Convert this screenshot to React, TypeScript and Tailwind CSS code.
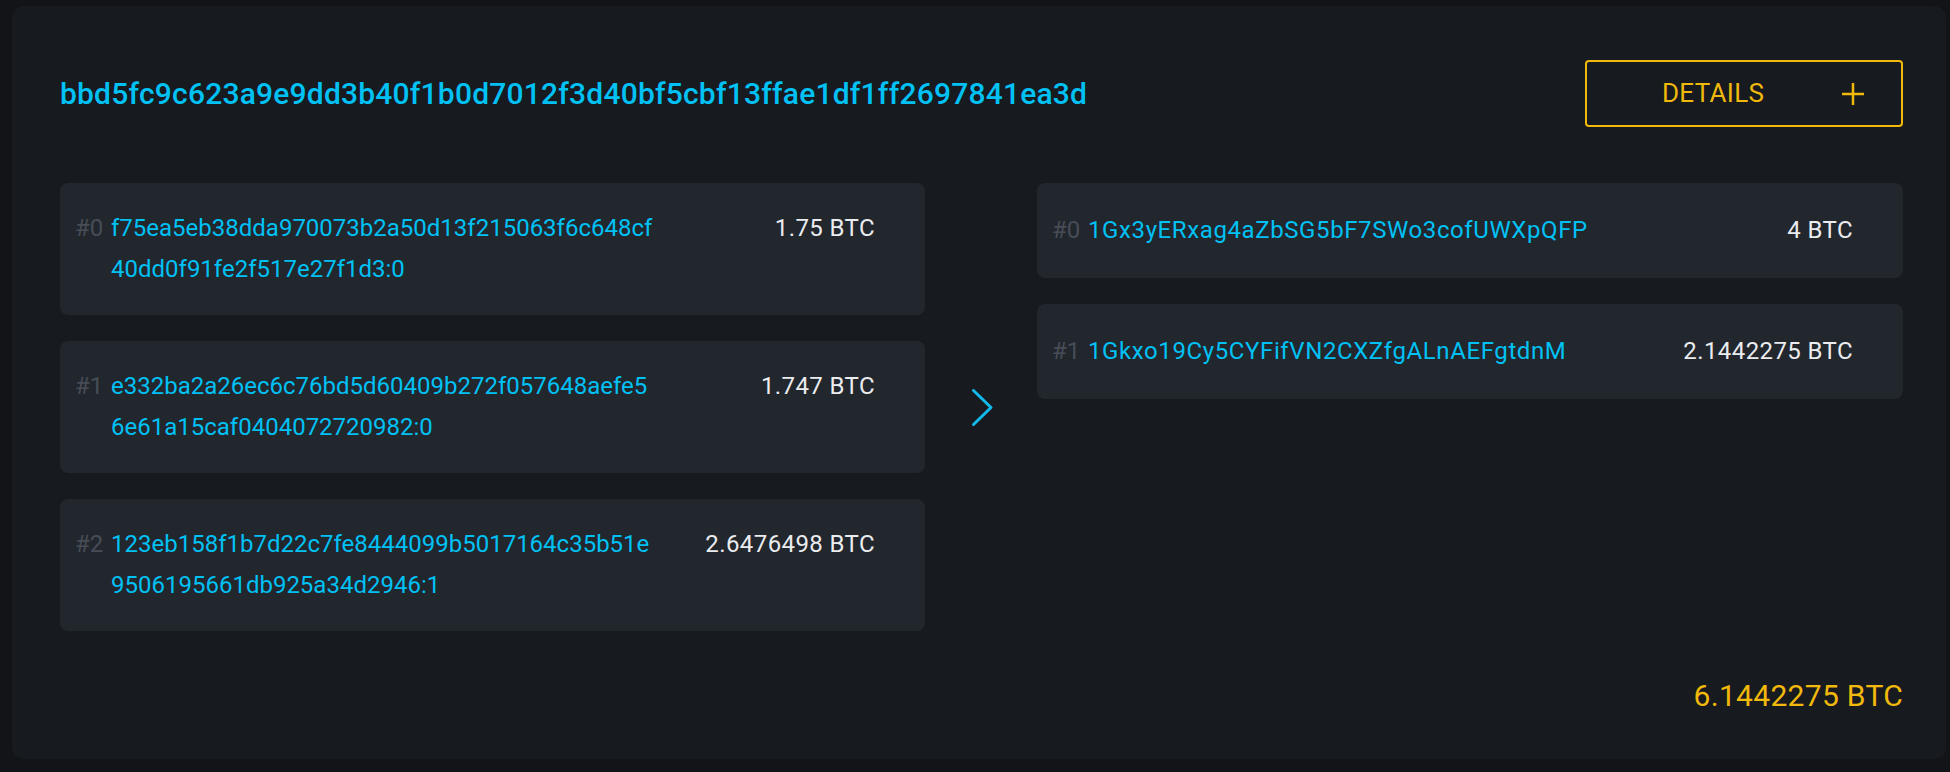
import React from 'react';

const FONT = "font-['Roboto','Liberation_Sans',sans-serif]";

interface Vin {
  hash: string;
  amount: string;
}

interface Vout {
  address: string;
  amount: string;
}

const inputs: Vin[] = [
  { hash: 'f75ea5eb38dda970073b2a50d13f215063f6c648cf40dd0f91fe2f517e27f1d3:0', amount: '1.75 BTC' },
  { hash: 'e332ba2a26ec6c76bd5d60409b272f057648aefe56e61a15caf0404072720982:0', amount: '1.747 BTC' },
  { hash: '123eb158f1b7d22c7fe8444099b5017164c35b51e9506195661db925a34d2946:1', amount: '2.6476498 BTC' },
];

const outputs: Vout[] = [
  { address: '1Gx3yERxag4aZbSG5bF7SWo3cofUWXpQFP', amount: '4 BTC' },
  { address: '1Gkxo19Cy5CYFifVN2CXZfgALnAEFgtdnM', amount: '2.1442275 BTC' },
];

const Chevron = () => (
  <svg width="23" height="39" viewBox="0 0 23 39" fill="none">
    <polyline
      points="2.5,2.5 20,19.5 2.5,36.5"
      stroke="#13b9ea"
      strokeWidth="3"
      strokeLinecap="round"
      strokeLinejoin="round"
    />
  </svg>
);

const InputRow: React.FC<{ index: number; item: Vin }> = ({ index, item }) => (
  <div className="flex items-start rounded-[8px] bg-[#22262d] pl-[15px] pr-[50px] py-[25px] text-[24px] leading-[41px]">
    <span className="w-[36px] shrink-0 text-[#474d57]">#{index}</span>
    <span className="w-[548px] break-all text-[#00c1f4]">{item.hash}</span>
    <span className="ml-auto tracking-[0.4px] text-[#eaecef]">{item.amount}</span>
  </div>
);

const OutputRow: React.FC<{ index: number; item: Vout }> = ({ index, item }) => (
  <div className="flex items-start rounded-[8px] bg-[#22262d] pl-[15px] pr-[50px] py-[27px] text-[24px] leading-[41px]">
    <span className="w-[36px] shrink-0 text-[#474d57]">#{index}</span>
    <span className="tracking-[0.6px] text-[#00c1f4]">{item.address}</span>
    <span className="ml-auto tracking-[0.4px] text-[#eaecef]">{item.amount}</span>
  </div>
);

export default function App() {
  return (
    <div className={`h-[772px] w-[1950px] bg-[#131417] pt-[6px] pl-[12px] ${FONT}`}>
      <div className="flex h-[753px] w-[1934px] flex-col rounded-[12px] bg-[#171a1f] pl-[48px] pr-[43px] pt-[54px]">
        <div className="flex items-center justify-between">
          <h1 className="text-[30px] font-medium tracking-[0.2px] text-[#00c1f4]">
            bbd5fc9c623a9e9dd3b40f1b0d7012f3d40bf5cbf13ffae1df1ff2697841ea3d
          </h1>
          <button className="flex h-[67px] w-[318px] items-center justify-between rounded-[4px] border-2 border-[#f0b90b] pl-[75px] pr-[37px] text-[26px] tracking-[0.3px] text-[#f0b90b]">
            <span>DETAILS</span>
            <svg width="22" height="22" viewBox="0 0 22 22">
              <path d="M11 0v22M0 11h22" stroke="#f0b90b" strokeWidth="2.5" />
            </svg>
          </button>
        </div>

        <div className="mt-[56px] grid grid-cols-[865px_112px_1fr]">
          <div className="flex flex-col gap-[26px]">
            {inputs.map((v, i) => (
              <InputRow key={i} index={i} item={v} />
            ))}
          </div>
          <div className="flex items-center justify-center pl-[2px]">
            <Chevron />
          </div>
          <div className="flex flex-col gap-[26px]">
            {outputs.map((v, i) => (
              <OutputRow key={i} index={i} item={v} />
            ))}
          </div>
        </div>

        <div className="mt-[47px] text-right text-[30px] leading-[36px] tracking-[0.3px] text-[#f0b90b]">6.1442275 BTC</div>
      </div>
    </div>
  );
}
